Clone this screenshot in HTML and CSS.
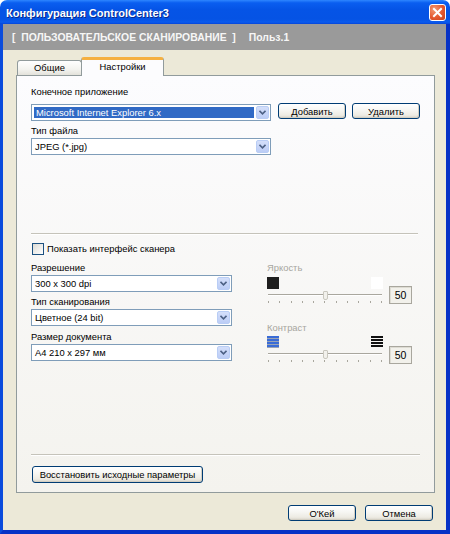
FILE: index.html
```html
<!DOCTYPE html>
<html lang="ru">
<head>
<meta charset="utf-8">
<title>Конфигурация ControlCenter3</title>
<link rel="stylesheet" href="styles.css">
</head>
<body>
<div class="window">
  <div class="titlebar">
    <span class="title">Конфигурация ControlCenter3</span>
    <div class="close">
      <svg width="11" height="11" viewBox="0 0 11 11"><path d="M2 2 L9 9 M9 2 L2 9" stroke="#fff" stroke-width="2" stroke-linecap="square"/></svg>
    </div>
  </div>
  <div class="frame">
    <div class="header"><span class="h-main">[&nbsp; ПОЛЬЗОВАТЕЛЬСКОЕ СКАНИРОВАНИЕ &nbsp;]</span><span class="h-user">Польз.1</span></div>
    <div class="body">
      <div class="tabs">
        <div class="tab">Общие</div>
        <div class="tab active">Настройки</div>
      </div>
      <div class="panel">
        <div class="label first">Конечное приложение</div>
        <div class="row1">
          <div class="combo wide"><div class="combo-text selected">Microsoft Internet Explorer 6.x</div><div class="arrow"><svg width="7" height="5" viewBox="0 0 7 5"><path d="M0.5 0.8 L3.5 3.8 L6.5 0.8" fill="none" stroke="#4D6185" stroke-width="1.6"/></svg></div></div>
          <button class="btn add">Добавить</button>
          <button class="btn del">Удалить</button>
        </div>
        <div class="label l2">Тип файла</div>
        <div class="combo wide c2"><div class="combo-text">JPEG (*.jpg)</div><div class="arrow"><svg width="7" height="5" viewBox="0 0 7 5"><path d="M0.5 0.8 L3.5 3.8 L6.5 0.8" fill="none" stroke="#4D6185" stroke-width="1.6"/></svg></div></div>
        <div class="sep sep1"></div>
        <label class="check-row"><span class="checkbox"></span><span>Показать интерфейс сканера</span></label>
        <div class="lower">
          <div class="left-col">
            <div class="label">Разрешение</div>
            <div class="combo narrow cc"><div class="combo-text">300 x 300 dpi</div><div class="arrow"><svg width="7" height="5" viewBox="0 0 7 5"><path d="M0.5 0.8 L3.5 3.8 L6.5 0.8" fill="none" stroke="#4D6185" stroke-width="1.6"/></svg></div></div>
            <div class="label l4">Тип сканирования</div>
            <div class="combo narrow cc"><div class="combo-text">Цветное (24 bit)</div><div class="arrow"><svg width="7" height="5" viewBox="0 0 7 5"><path d="M0.5 0.8 L3.5 3.8 L6.5 0.8" fill="none" stroke="#4D6185" stroke-width="1.6"/></svg></div></div>
            <div class="label l5">Размер документа</div>
            <div class="combo narrow cc"><div class="combo-text">A4 210 x 297 мм</div><div class="arrow"><svg width="7" height="5" viewBox="0 0 7 5"><path d="M0.5 0.8 L3.5 3.8 L6.5 0.8" fill="none" stroke="#4D6185" stroke-width="1.6"/></svg></div></div>
          </div>
          <div class="right-col">
            <div class="label dim">Яркость</div>
            <div class="sgroup">
              <div class="slider">
                <div class="icons">
                  <span class="sq black"></span>
                  <span class="sq white"></span>
                </div>
                <div class="track"><span class="thumb"></span></div>
                <div class="ticks"><i></i><i></i><i></i><i></i><i></i><i></i><i></i><i></i><i></i><i></i><i></i></div>
              </div>
              <div class="value">50</div>
            </div>
            <div class="label dim l-con">Контраст</div>
            <div class="sgroup">
              <div class="slider">
                <div class="icons">
                  <svg width="12" height="12" viewBox="0 0 12 12"><rect width="12" height="12" fill="#3A6CD6"/><rect y="2" width="12" height="1" fill="#9AA3B5"/><rect y="5" width="12" height="1" fill="#9AA3B5"/><rect y="8" width="12" height="1" fill="#9AA3B5"/><rect y="11" width="12" height="1" fill="#9AA3B5"/></svg>
                  <svg width="12" height="12" viewBox="0 0 12 12"><rect y="0" width="12" height="2" fill="#111"/><rect y="3" width="12" height="2" fill="#111"/><rect y="6" width="12" height="2" fill="#111"/><rect y="9" width="12" height="2" fill="#111"/></svg>
                </div>
                <div class="track"><span class="thumb"></span></div>
                <div class="ticks"><i></i><i></i><i></i><i></i><i></i><i></i><i></i><i></i><i></i><i></i><i></i></div>
              </div>
              <div class="value">50</div>
            </div>
          </div>
        </div>
        <div class="sep sep2"></div>
        <button class="btn restore">Восстановить исходные параметры</button>
      </div>
      <div class="dlg-buttons">
        <button class="btn dlg">O'Кей</button>
        <button class="btn dlg">Отмена</button>
      </div>
    </div>
  </div>
</div>
</body>
</html>
```
FILE: styles.css
```css
* { box-sizing: border-box; }
html, body { margin: 0; padding: 0; background: #ffffff; }
body {
  font-family: "Liberation Sans", Arial, sans-serif;
  font-size: 9.4px;
  color: #000;
}
.window {
  width: 450px;
  height: 534px;
  display: flex;
  flex-direction: column;
}
.titlebar {
  height: 24px;
  border-radius: 7px 7px 0 0;
  background: linear-gradient(#2E86FF 0%, #0A5EF0 12%, #0554E6 40%, #0553E4 80%, #0A5BEE 92%, #0645D8 100%);
  display: flex;
  align-items: center;
  justify-content: space-between;
  padding: 0 4px 0 6px;
}
.title {
  color: #fff;
  font-weight: bold;
  font-size: 11px;
  text-shadow: 1px 1px 0 #0A2A8C;
  margin-top: 1px;
}
.close {
  width: 17px;
  height: 17px;
  border: 1px solid #fff;
  border-radius: 3px;
  background: radial-gradient(circle at 30% 30%, #F29A73 0%, #E4582F 55%, #C8431E 100%);
  display: flex;
  align-items: center;
  justify-content: center;
}
.frame {
  flex: 1;
  display: flex;
  flex-direction: column;
  border-left: 3px solid #0A4BDC;
  border-right: 4px solid #0632C6;
  border-bottom: 4px solid #0632C6;
}
.header {
  height: 26px;
  background: #9A9A9A;
  color: #F6F6F6;
  font-weight: bold;
  font-size: 10.4px;
  display: flex;
  align-items: center;
  padding-left: 9px;
}
.h-user { margin-left: 13px; }
.body {
  flex: 1;
  background: #ECE9D8;
  padding: 7px 11px 0 13px;
  display: flex;
  flex-direction: column;
}
.tabs {
  height: 18px;
  display: flex;
  align-items: flex-end;
  padding-left: 1px;
}
.tab {
  height: 15px;
  width: 65px;
  border: 1px solid #919B9C;
  border-bottom: none;
  border-radius: 3px 3px 0 0;
  background: linear-gradient(#FFFFFF, #F3F3EF 60%, #E3E2DB);
  text-align: center;
  line-height: 14px;
  margin-right: -1px;
}
.tab.active {
  position: relative;
  z-index: 1;
  width: 83px;
  height: 19px;
  margin-bottom: -1px;
  background: #FCFCFE;
  border-top: 3px solid #F5B041;
  line-height: 14px;
}
.panel {
  width: 419px;
  height: 418px;
  border: 1px solid #919B9C;
  background: linear-gradient(#FCFCFE, #F4F3EE);
  padding: 0 0 0 14px;
  display: flex;
  flex-direction: column;
  align-items: flex-start;
}
.label { line-height: 12px; height: 12px; white-space: nowrap; }
.label.first { margin-top: 10px; }
.label.dim { color: #A7A6A0; }
.row1 {
  margin-top: 5px;
  display: flex;
  align-items: flex-start;
  height: 18px;
}
.combo {
  height: 17px;
  border: 1px solid #7F9DB9;
  background: #fff;
  display: flex;
  align-items: stretch;
  padding: 1px;
}
.combo.wide { width: 240px; margin-top: 1px; }
.combo.narrow { width: 201px; }
.combo-text {
  flex: 1;
  line-height: 13px;
  padding-left: 2px;
  white-space: nowrap;
  overflow: hidden;
}
.combo-text.selected {
  background: #316AC5;
  color: #fff;
  margin: 1px 2px 1px 1px;
  line-height: 11px;
}
.arrow {
  width: 13px;
  border: 1px solid #B9CDF5;
  border-radius: 2px;
  background: linear-gradient(#D4DFFA, #BCCDF6);
  display: flex;
  align-items: center;
  justify-content: center;
}
.btn {
  font-family: "Liberation Sans", Arial, sans-serif;
  font-size: 9.4px;
  color: #000;
  height: 16px;
  border: 1px solid #003C74;
  border-radius: 3px;
  background: linear-gradient(#FFFFFF 0%, #F7F7F4 40%, #EDEBE3 80%, #D7D3C8 100%);
  padding: 0;
  line-height: 13px;
  box-shadow: inset -1px -1px 0 #D3CFC3;
}
.btn.add { width: 68px; margin-left: 7px; }
.btn.del { width: 68px; margin-left: 6px; }
.label.l2 { margin-top: 4px; }
.combo.c2 { margin-top: 1px; }
.sep {
  height: 1px;
  background: #C5C3BA;
  box-shadow: 0 1px 0 #FFFFFF;
}
.sep1 { width: 387px; margin-top: 78px; }
.check-row {
  margin-top: 9px;
  display: flex;
  align-items: center;
  height: 12px;
  line-height: 12px;
}
.checkbox {
  width: 12px;
  height: 12px;
  border: 1px solid #1C5180;
  background: linear-gradient(135deg, #DCDBD5, #FFFFFF);
  margin-left: 1px;
  margin-right: 3px;
}
.lower {
  margin-top: 7px;
  display: flex;
  align-items: flex-start;
  height: 192px;
}
.left-col { width: 201px; display: flex; flex-direction: column; }
.cc { margin-top: 1px; }
.label.l4 { margin-top: 4px; }
.label.l5 { margin-top: 5px; }
.right-col {
  margin-left: 35px;
  display: flex;
  flex-direction: column;
}
.sgroup { display: flex; align-items: flex-start; margin-top: 3px; }
.slider { width: 117px; display: flex; flex-direction: column; }
.icons {
  height: 12px;
  display: flex;
  justify-content: space-between;
  padding-right: 1px;
}
.sq { width: 12px; height: 12px; display: block; }
.sq.black { background: #1E1E1E; }
.sq.white { background: #FFFFFF; }
.track {
  position: relative;
  margin-top: 5px;
  height: 2px;
  width: 114px;
  margin-left: 1px;
  border-top: 1px solid #A9A79E;
  border-bottom: 1px solid #FFFFFF;
}
.thumb {
  position: absolute;
  left: 55px;
  top: -4px;
  width: 5px;
  height: 9px;
  background: #F2F1EC;
  border: 1px solid #C9C7BE;
  border-radius: 1px 1px 2px 2px;
}
.ticks {
  margin-top: 5px;
  height: 2px;
  display: flex;
  justify-content: space-between;
  width: 115px;
  padding-left: 1px;
}
.ticks i { display: block; width: 1px; height: 2px; background: #A9A79E; }
.value {
  width: 23px;
  height: 18px;
  margin-left: 5px;
  margin-top: 9px;
  border: 1px solid #A9A79E;
  background: #F2F1EB;
  text-align: center;
  line-height: 16px;
  font-size: 10.5px;
  box-shadow: inset 1px 1px 0 #DEDCD3;
}
.label.l-con { margin-top: 18px; }
.right-col .label.dim.l-con + .sgroup { margin-top: 2px; }
.right-col .sgroup:last-child .value { margin-top: 10px; }
.sep2 { width: 389px; margin-top: 0; }
.btn.restore { width: 171px; margin-top: 11px; margin-left: 1px; height: 17px; }
.dlg-buttons {
  margin-top: 12px;
  display: flex;
  justify-content: flex-end;
  gap: 9px;
  padding-right: 2px;
}
.btn.dlg { width: 68px; height: 16px; }
```
